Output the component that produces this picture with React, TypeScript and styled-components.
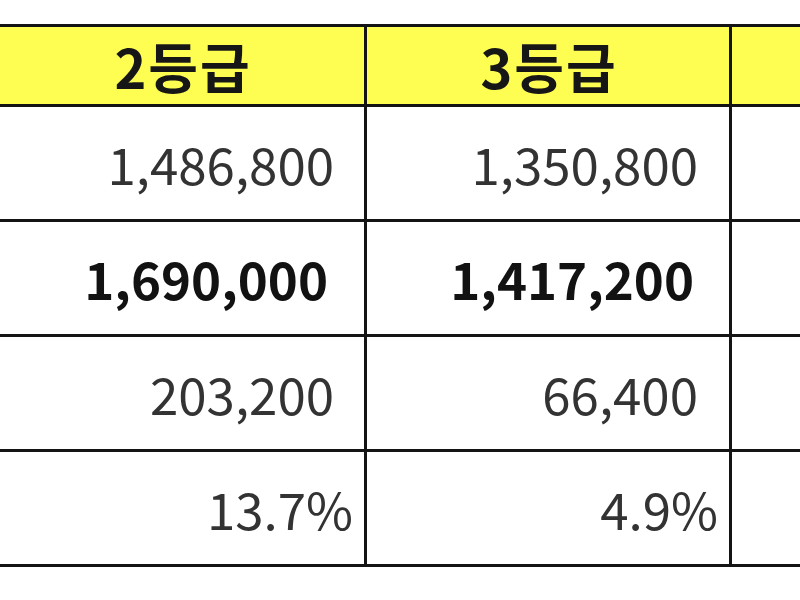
import React from "react";
import styled, { createGlobalStyle } from "styled-components";

const Global = createGlobalStyle`
  html, body { margin: 0; padding: 0; background: #ffffff; }
  body { width: 800px; height: 600px; overflow: hidden; }
`;

const Page = styled.div`
  width: 800px;
  height: 600px;
  overflow: hidden;
  background: #ffffff;
  padding-top: 24px;
  box-sizing: border-box;
  font-family: "Noto Sans CJK KR", "Noto Sans", sans-serif;
`;

const Table = styled.table`
  border-collapse: separate;
  border-spacing: 0;
  table-layout: fixed;
  width: 1097px;
`;

const Col = styled.col<{ $w: number }>`
  width: ${(p) => p.$w}px;
`;

const HeadCell = styled.th`
  height: 77px;
  padding: 0 0 0 2px;
  background: #fdfd52;
  border-top: 3px solid #141414;
  border-right: 3px solid #141414;
  border-bottom: 3px solid #141414;
  font-size: 54px;
  font-weight: 700;
  color: #161616;
  text-align: center;
  vertical-align: middle;
  line-height: 1;
  letter-spacing: 2px;
`;

const Cell = styled.td<{ $bold?: boolean; $pr: number }>`
  height: 112px;
  padding: 0 ${(p) => p.$pr}px 0 0;
  border-right: 3px solid #141414;
  border-bottom: 3px solid #141414;
  font-size: 51px;
  font-weight: ${(p) => (p.$bold ? 700 : 400)};
  color: ${(p) => (p.$bold ? "#121212" : "#333333")};
  text-align: right;
  vertical-align: middle;
  line-height: 1;
  white-space: nowrap;
`;

type Row = { values: string[]; bold?: boolean; pr: number[] };

const rows: Row[] = [
  { values: ["1,486,800", "1,350,800", ""], pr: [30, 31, 31] },
  { values: ["1,690,000", "1,417,200", ""], bold: true, pr: [36, 35, 35] },
  { values: ["203,200", "66,400", ""], pr: [30, 31, 31] },
  { values: ["13.7%", "4.9%", ""], pr: [11, 11, 11] },
];

export default function App() {
  return (
    <>
      <Global />
      <Page>
        <Table>
          <colgroup>
            <Col $w={367} />
            <Col $w={365} />
            <Col $w={365} />
          </colgroup>
          <thead>
            <tr>
              <HeadCell>2등급</HeadCell>
              <HeadCell>3등급</HeadCell>
              <HeadCell></HeadCell>
            </tr>
          </thead>
          <tbody>
            {rows.map((r, i) => (
              <tr key={i}>
                {r.values.map((v, j) => (
                  <Cell key={j} $bold={r.bold} $pr={r.pr[j]}>
                    {v}
                  </Cell>
                ))}
              </tr>
            ))}
          </tbody>
        </Table>
      </Page>
    </>
  );
}
